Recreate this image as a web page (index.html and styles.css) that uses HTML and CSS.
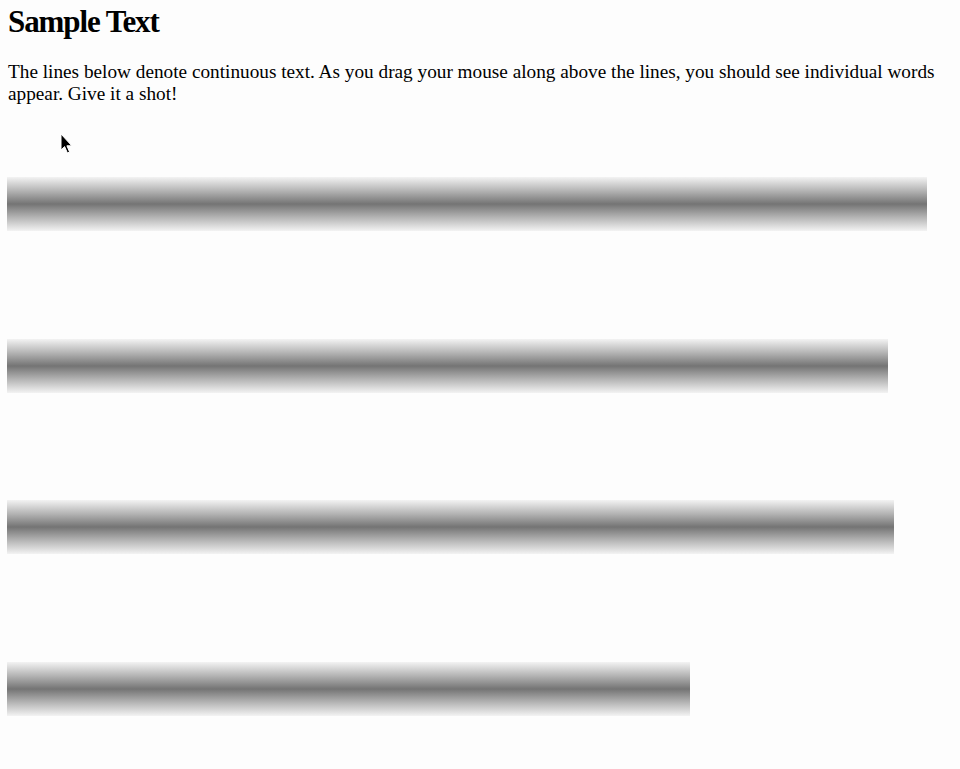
FILE: index.html
```html
<!DOCTYPE html>
<html>
<head>
<meta charset="utf-8">
<link rel="stylesheet" href="styles.css">
</head>
<body>
<div class="page">
  <h1 class="title">Sample Text</h1>
  <p class="intro">The lines below denote continuous text. As you drag your mouse along above the lines, you should see individual words appear. Give it a shot!</p>
  <div class="lines">
    <div class="line" style="width:920px"></div>
    <div class="line" style="width:881px"></div>
    <div class="line" style="width:887px"></div>
    <div class="line" style="width:683px"></div>
  </div>
</div>
<svg class="cursor" width="14" height="22" viewBox="0 0 14 22">
  <path d="M1 1 L1 17 L4.6 13.6 L7.4 20 L9.6 19 L6.9 12.8 L11.8 12.8 Z" fill="#000" stroke="#fff" stroke-width="1"/>
</svg>
</body>
</html>
```
FILE: styles.css
```css
html, body {
  margin: 0;
  padding: 0;
  background: #fdfdfd;
}
.page {
  padding: 0 0 0 7px;
  font-family: "Liberation Serif", "Times New Roman", serif;
  color: #000;
}
.title {
  margin: 3px 0 0 1px;
  font-size: 31px;
  font-weight: bold;
  line-height: 37px;
  letter-spacing: -1.1px;
}
.intro {
  margin: 21px 0 0 1px;
  font-size: 19.25px;
  line-height: 22px;
}
.lines {
  display: flex;
  flex-direction: column;
  gap: 107.5px;
  margin-top: 72px;
}
.line {
  height: 54px;
  background: linear-gradient(to bottom,
    #f3f3f3 0%,
    #b5b5b5 25%,
    #747474 50%,
    #b5b5b5 75%,
    #f3f3f3 100%);
}
.cursor {
  position: absolute;
  left: 60px;
  top: 133px;
}
```
